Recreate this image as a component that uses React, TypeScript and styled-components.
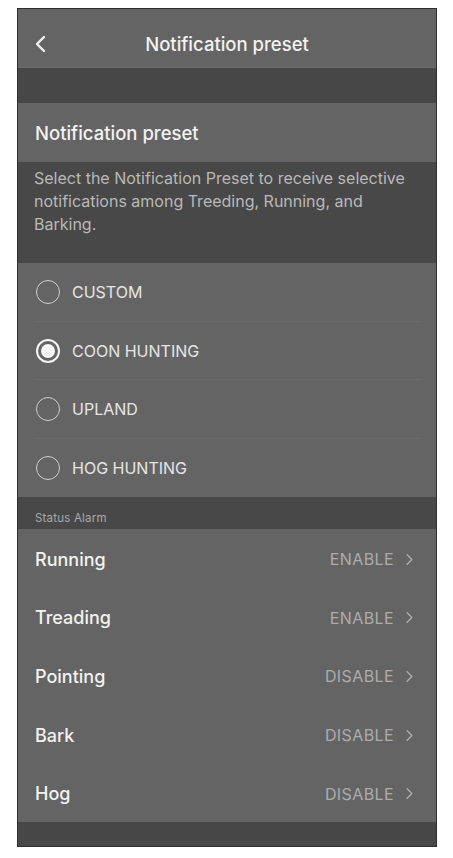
import React, { useState } from "react";
import styled, { createGlobalStyle } from "styled-components";

const Global = createGlobalStyle`
  html, body { margin: 0; padding: 0; background: #ffffff; }
  body { font-family: "Inter", "Liberation Sans", sans-serif; -webkit-font-smoothing: antialiased; }
  * { box-sizing: border-box; }
`;

const Page = styled.div`
  padding: 8px 16px 11px 17px;
  background: #fff;
`;

const Frame = styled.div`
  width: 420px;
  border: 1px solid #2f2f2f;
  background: #646464;
  display: flex;
  flex-direction: column;
`;

const Header = styled.div`
  height: 59px;
  padding-top: 11px;
  display: grid;
  grid-template-columns: 48px 1fr 48px;
  align-items: center;
  background: #646464;
  border-bottom: 1px solid #6d6d6d;
`;

const BackButton = styled.button`
  background: none;
  border: 0;
  padding: 0 0 0 17px;
  display: flex;
  align-items: center;
  cursor: pointer;
  height: 24px;
`;

const Title = styled.div`
  text-align: center;
  color: #f2f2f2;
  font-size: 18.5px;
  font-weight: 500;
`;

const Band = styled.div<{ $h: number }>`
  height: ${(p) => p.$h}px;
  background: #474747;
`;

const SectionTitle = styled.div`
  height: 59px;
  display: flex;
  align-items: center;
  padding: 0 17px;
  background: #646464;
  color: #f2f2f2;
  font-size: 18.5px;
  font-weight: 500;
`;

const Description = styled.p`
  margin: 0;
  height: 101px;
  padding: 5px 14px 0 16px;
  background: #484848;
  color: #b9b9b9;
  font-size: 16px;
  line-height: 23px;
`;

const RadioList = styled.div`
  display: flex;
  flex-direction: column;
  background: #646464;
`;

const RadioRow = styled.label<{ $last?: boolean }>`
  height: 58.5px;
  display: flex;
  align-items: center;
  gap: 12px;
  margin: 0 14px 0 16px;
  padding: 1px 0 0 2px;
  border-bottom: 1px solid ${(p) => (p.$last ? "transparent" : "#6a6a6a")};
  cursor: pointer;
`;

const RadioCircle = styled.span<{ $on: boolean }>`
  width: 24px;
  height: 24px;
  border-radius: 50%;
  border: ${(p) => (p.$on ? "2px solid #f4f4f4" : "1.6px solid #cdcdcd")};
  display: flex;
  align-items: center;
  justify-content: center;
  flex-shrink: 0;
  &::after {
    content: "";
    display: ${(p) => (p.$on ? "block" : "none")};
    width: 14px;
    height: 14px;
    border-radius: 50%;
    background: #f6f6f6;
  }
`;

const RadioLabel = styled.span`
  color: #e6e6e6;
  font-size: 16px;
`;

const GroupLabel = styled.div`
  height: 32px;
  display: flex;
  align-items: flex-end;
  padding: 0 17px 4px;
  background: #484848;
  color: #a9a9a9;
  font-size: 11.5px;
  letter-spacing: 0.2px;
`;

const StatusRow = styled.div`
  height: 58.6px;
  display: flex;
  align-items: center;
  justify-content: space-between;
  padding: 2px 23px 0 17px;
  background: #646464;
  cursor: pointer;
`;

const StatusName = styled.span`
  color: #f2f2f2;
  font-size: 18px;
  font-weight: 500;
`;

const StatusValue = styled.span`
  display: flex;
  align-items: center;
  gap: 12px;
  color: #acacac;
  font-size: 16px;
  letter-spacing: 0.4px;
`;

const Chevron = ({ color, w, h, sw }: { color: string; w: number; h: number; sw: number }) => (
  <svg width={w} height={h} viewBox="0 0 8 14" fill="none">
    <path d="M1 1 L7 7 L1 13" stroke={color} strokeWidth={sw} strokeLinecap="round" strokeLinejoin="round" />
  </svg>
);

const BackChevron = () => (
  <svg width="11" height="18" viewBox="0 0 11 18" fill="none">
    <path d="M9 2 L2 9 L9 16" stroke="#f0f0f0" strokeWidth="2.4" strokeLinecap="round" strokeLinejoin="round" />
  </svg>
);

const presets = ["CUSTOM", "COON HUNTING", "UPLAND", "HOG HUNTING"];
const alarms: { name: string; value: string }[] = [
  { name: "Running", value: "ENABLE" },
  { name: "Treading", value: "ENABLE" },
  { name: "Pointing", value: "DISABLE" },
  { name: "Bark", value: "DISABLE" },
  { name: "Hog", value: "DISABLE" },
];

export default function App() {
  const [selected, setSelected] = useState(1);
  return (
    <Page>
      <Global />
      <Frame>
        <Header>
          <BackButton aria-label="Back">
            <BackChevron />
          </BackButton>
          <Title>Notification preset</Title>
          <span />
        </Header>
        <Band $h={35} />
        <SectionTitle>Notification preset</SectionTitle>
        <Description>
          Select the Notification Preset to receive selective notifications among Treeding, Running, and Barking.
        </Description>
        <RadioList>
          {presets.map((p, i) => (
            <RadioRow key={p} $last={i === presets.length - 1} onClick={() => setSelected(i)}>
              <RadioCircle $on={selected === i} />
              <RadioLabel>{p}</RadioLabel>
            </RadioRow>
          ))}
        </RadioList>
        <GroupLabel>Status Alarm</GroupLabel>
        {alarms.map((a) => (
          <StatusRow key={a.name}>
            <StatusName>{a.name}</StatusName>
            <StatusValue>
              {a.value}
              <Chevron color="#b0b0b0" w={7} h={11} sw={1.6} />
            </StatusValue>
          </StatusRow>
        ))}
        <Band $h={24} />
      </Frame>
    </Page>
  );
}
